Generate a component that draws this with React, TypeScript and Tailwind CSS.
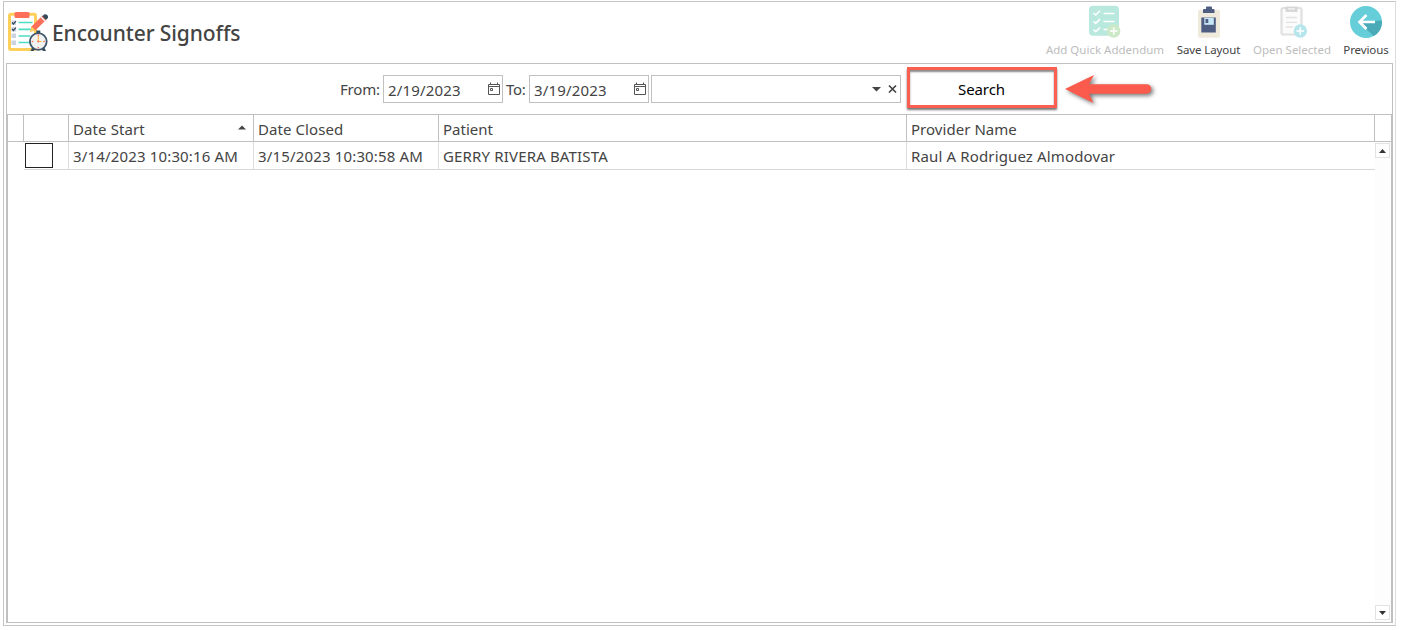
import type { ReactNode } from "react";

function EncounterIcon() {
  return (
    <svg width="42" height="42" viewBox="0 0 42 42" className="shrink-0">
      <rect x="2.5" y="4.2" width="26" height="35.3" rx="1.5" fill="#fff" stroke="#ffcf5c" strokeWidth="3" />
      <rect x="7.5" y="2" width="15" height="6" rx="1.5" fill="#fd6f58" />
      <g stroke="#4fdcc4" strokeWidth="1.7">
        <path d="M11.500 12.500h14M11.500 19.300h14M11.500 26h12M11.500 32.500h12" />
      </g>
      <g fill="#ccd3e0">
        <rect x="4.500" y="10.500" width="4.500" height="4.500" />
        <rect x="4.500" y="17" width="4.500" height="4.500" />
        <rect x="4.500" y="23.500" width="4.500" height="4.500" />
        <rect x="4.500" y="30.500" width="4.500" height="4.500" />
      </g>
      <path d="M5 12.500l1.400 1.500L9 11.200M5 19l1.400 1.500L9 17.700" stroke="#344b5e" strokeWidth="1.200" fill="none" />
      <path d="M24.500 16.500L35.500 5.500L39.500 9.500L28.800 20L23.500 21.500z" fill="#fd6f58" />
      <path d="M24.500 16.500l4 4L22.800 22z" fill="#ffd15c" />
      <path d="M34 7l4 4" stroke="#f2f2f2" strokeWidth="1.400" />
      <path d="M35.300 6.200L37.500 4.200Q41.500 4 41 8L38.900 9.800z" fill="#344b5e" />
      <path d="M25.500 37l-2 4h3l2-2.500M37 37l2 4h-3l-2-2.500" fill="#344b5e" />
      <rect x="29.300" y="20.500" width="4" height="3" fill="#344b5e" />
      <circle cx="31.300" cy="31.500" r="8.400" fill="#f2f2f2" stroke="#40566b" strokeWidth="1.800" />
      <path d="M31.300 26v5.500h3.500" stroke="#ffbd55" strokeWidth="1.200" fill="none" />
      <g fill="#fd6f58">
        <rect x="30.600" y="24.500" width="1.400" height="1.400" />
        <rect x="30.600" y="37" width="1.400" height="1.400" />
        <rect x="24.800" y="30.800" width="1.400" height="1.400" />
        <rect x="36.500" y="30.800" width="1.400" height="1.400" />
        <circle cx="31.300" cy="31.500" r="1.100" />
      </g>
    </svg>
  );
}

function ChecklistIcon() {
  return (
    <svg width="34" height="34" viewBox="0 0 34 34">
      <rect x="1" y="1.800" width="30" height="30" rx="4" fill="#b9e9de" />
      <path d="M5.500 9l2.200 2L12 6.800M5.500 17.300l2.200 2L12 15.100M5.500 25.700l2.200 2L12 23.500M15.500 9.500h11M15.500 17.500h11M15.500 25.500h5" stroke="#fff" strokeWidth="1.600" fill="none" />
      <circle cx="25.700" cy="27" r="6.700" fill="#cbe8c7" />
      <path d="M25.700 23.300v7.400M22 27h7.400" stroke="#fff" strokeWidth="1.500" />
    </svg>
  );
}

function SaveIcon() {
  return (
    <svg width="34" height="34" viewBox="0 0 34 34">
      <rect x="6" y="5.700" width="22" height="28" rx="2" fill="#f0eadd" />
      <path d="M11 6a1 1 0 011-1h2V3.500a1 1 0 011-1h4a1 1 0 011 1V5h1.500a1 1 0 011 1v3H11z" fill="#4f5d83" />
      <path d="M9.300 13.500h14.500v15H9.300z" fill="#4f5d83" />
      <path d="M12.300 13.800h9.500v7h-9.500z" fill="#c9e8f7" />
      <path d="M13.500 15h2.800v4h-2.800z" fill="#4f5d83" />
    </svg>
  );
}

function OpenIcon() {
  return (
    <svg width="34" height="34" viewBox="0 0 34 34">
      <rect x="6.500" y="4" width="20" height="26.500" rx="2" fill="#fbfbfb" stroke="#e0e0e0" strokeWidth="2.200" />
      <path d="M10.500 2.500h12v5.400h-12z" fill="#d6d6d6" />
      <path d="M13 4.900h7" stroke="#f5f5f5" strokeWidth="1.300" />
      <path d="M11 13.500h11M11 18.300h11M11 23h7" stroke="#e2e2e2" strokeWidth="1.300" />
      <circle cx="25.300" cy="27" r="6.700" fill="#b6e6eb" />
      <path d="M25.300 23.200v7.600M21.500 27h7.600" stroke="#fff" strokeWidth="1.500" />
    </svg>
  );
}

function PreviousIcon() {
  return (
    <svg width="34" height="34" viewBox="0 0 34 34">
      <circle cx="17" cy="18" r="16" fill="#65ced8" />
      <path d="M11 19L24.600 32.100A16 16 0 0033 18L32.500 16.500L26 17z" fill="#4aaab8" />
      <path d="M26 18H11M17.500 11L10.500 18l7 7" stroke="#fff" strokeWidth="2.700" fill="none" />
    </svg>
  );
}

function CalendarIcon() {
  return (
    <svg width="14" height="14" viewBox="0 0 14 14" fill="none" stroke="#555">
      <path d="M1.500 2.500h11v10h-11zM1 4.500h12M3.500 .5v2M10.500 .5v2" />
      <path d="M3.500 6.500h2v2h-2z" />
    </svg>
  );
}

function Tool({ icon, label, className }: { icon: ReactNode; label: string; className: string }) {
  return (
    <button className={"flex flex-col items-center pt-[2px] text-[11.5px] leading-[16px] whitespace-nowrap " + className}>
      {icon}
      <span className="mt-[4px]">{label}</span>
    </button>
  );
}

function DateField({ value }: { value: string }) {
  return (
    <div className="flex h-[28px] w-[120px] items-center justify-between border border-[#c0c0c0] pr-px pl-1">
      <span className="mt-[2px] tracking-[0.17px]">{value}</span>
      <CalendarIcon />
    </div>
  );
}

const headCell = "border-r border-b border-[#c0c0c0] pt-[3px] pl-[4px] leading-[22px]";
const bodyCell =
  "border-r border-b border-r-[#dcdcdc] border-b-[#d8d8d8] pt-[3px] pl-[4px] leading-[22px] tracking-[0.16px]";

export default function App() {
  return (
    <div className="h-[630px] w-[1402px] bg-white pt-px pl-[3px] font-['Noto_Sans','Open_Sans',sans-serif] text-[15px] text-[#444]">
      <main className="flex h-[625px] w-[1393px] flex-col border border-[#c4c4c4] border-r-[#dcdcdc] pr-[2px] pb-[2px] pl-[2px]">
        <header className="flex h-[61px] justify-between">
          <div className="flex pt-[8px] pl-px">
            <EncounterIcon />
            <h1 className="mt-[9px] ml-[3px] text-[21px] leading-[28px] font-medium tracking-[-0.1px] whitespace-nowrap">
              Encounter Signoffs
            </h1>
          </div>
          <div className="-mr-[2px] flex">
            <Tool icon={<ChecklistIcon />} label="Add Quick Addendum" className="w-[130px] text-[#bdbdbd]" />
            <Tool icon={<SaveIcon />} label="Save Layout" className="w-[77px] tracking-[-0.1px]" />
            <Tool icon={<OpenIcon />} label="Open Selected" className="w-[90px] text-[#bdbdbd]" />
            <Tool icon={<PreviousIcon />} label="Previous" className="w-[58px] tracking-[-0.1px]" />
          </div>
        </header>

        <section className="flex grow flex-col border border-[#c0c0c0]">
          <div className="flex h-[50px] pt-[11px] pl-[333px]">
            <label className="mt-[3px] w-[43px] leading-[23px] tracking-[-0.2px]">From:</label>
            <DateField value="2/19/2023" />
            <label className="mt-[3px] w-[26px] pl-[3px] leading-[23px] tracking-[-0.3px]">To:</label>
            <DateField value="3/19/2023" />
            <div className="ml-[2px] flex h-[28px] w-[250px] items-center justify-end border border-[#c0c0c0] pr-[2px]">
              <svg width="26" height="10" viewBox="0 0 26 10">
                <path d="M0 3h9L4.500 7.500z" fill="#444" />
                <path d="M17 1.500l7 7M24 1.500l-7 7" stroke="#444" strokeWidth="1.700" />
              </svg>
            </div>
            <button className="-mt-[8px] ml-[6px] h-[41px] w-[150px] border-[3px] border-[#fa5f51] pt-[4px] pr-px text-black tracking-[-0.1px] shadow-[0_2px_2px_#777,inset_0_2px_2px_#888]">
              Search
            </button>
            <svg className="-mt-[4px] ml-[7px] overflow-visible" width="92" height="36" viewBox="0 0 92 36">
              <path
                d="M1 18L30 4L25 13.200H82.500A4.700 4.700 0 0182.500 22.700H25L29.500 32z"
                fill="#fb5b4c"
                className="drop-shadow-[2px_2px_2px_#777]"
              />
            </svg>
          </div>

          <div className="flex grow flex-col border-t border-r border-[#c0c0c0]">
            <div className="grid h-[27px] grid-cols-[17px_45px_185px_185px_468px_468px_16px] whitespace-nowrap">
              <div className={headCell + " border-l"} />
              <div className={headCell} />
              <div className={headCell + " flex justify-between pr-[7px] tracking-[0.1px]"}>
                Date Start
                <svg width="8" height="5" viewBox="0 0 8 5" className="mt-[7px]">
                  <path d="M0 4.500L4 .5l4 4z" fill="#444" />
                </svg>
              </div>
              <div className={headCell + " tracking-[0.08px]"}>Date Closed</div>
              <div className={headCell}>Patient</div>
              <div className={headCell + " tracking-[0.04px]"}>Provider Name</div>
              <div className="border-b border-[#c0c0c0]" />
            </div>
            <div className="flex grow border-l border-[#c0c0c0]">
              <div className="w-[1367px]">
                <div className="grid h-[28px] grid-cols-[16px_45px_185px_185px_468px_468px] whitespace-nowrap">
                  <div />
                  <div className="border-r border-b border-r-[#dcdcdc] border-b-[#d8d8d8] pt-px pl-px">
                    <div className="h-[25px] w-[28px] border border-[#222]" />
                  </div>
                  <div className={bodyCell}>3/14/2023 10:30:16 AM</div>
                  <div className={bodyCell}>3/15/2023 10:30:58 AM</div>
                  <div className={bodyCell}>GERRY RIVERA BATISTA</div>
                  <div className="border-b border-[#d8d8d8] pt-[3px] pl-[4px] leading-[22px] tracking-[0.14px]">
                    Raul A Rodriguez Almodovar
                  </div>
                </div>
              </div>
              <div className="flex w-[16px] flex-col justify-between bg-[#fdfdfd] pt-px pr-px pb-[2px]">
                <div className="flex h-[15px] w-[15px] items-center justify-center border border-[#e2e2e2] bg-white">
                  <svg width="7" height="4" viewBox="0 0 7 4">
                    <path d="M0 4L3.500 0L7 4z" fill="#333" />
                  </svg>
                </div>
                <div className="flex h-[15px] w-[15px] items-center justify-center border border-[#e2e2e2] bg-white">
                  <svg width="7" height="4" viewBox="0 0 7 4">
                    <path d="M0 0L3.500 4L7 0z" fill="#333" />
                  </svg>
                </div>
              </div>
            </div>
          </div>
        </section>
      </main>
    </div>
  );
}
